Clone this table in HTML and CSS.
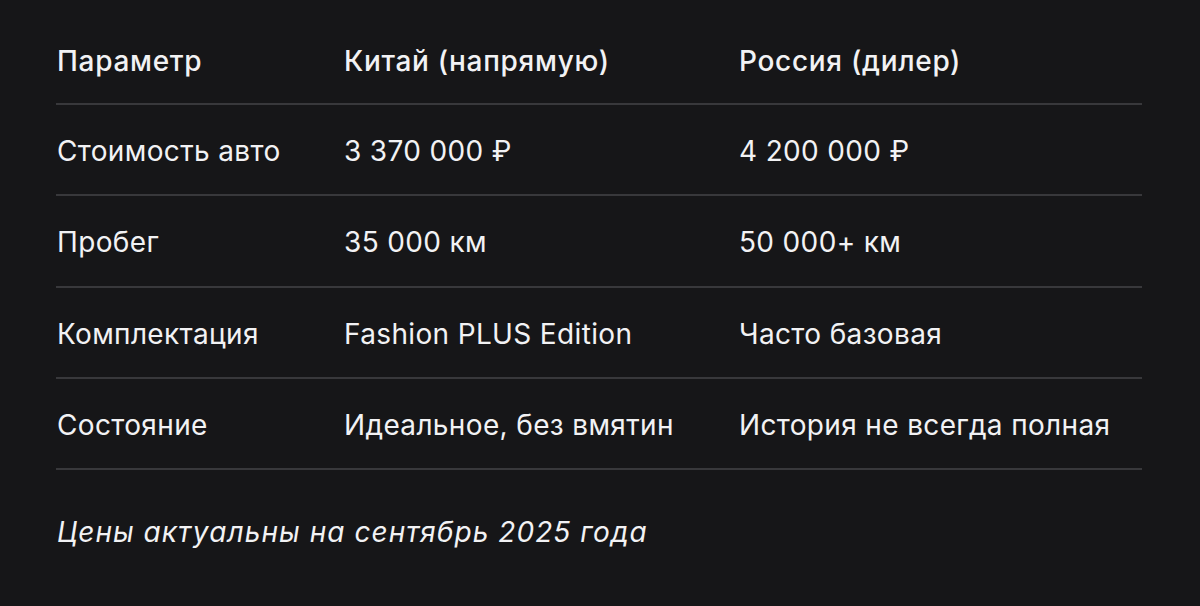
FILE: index.html
```html
<!DOCTYPE html>
<html lang="ru">
<head>
<meta charset="utf-8">
<link rel="stylesheet" href="styles.css">
</head>
<body>
<div class="wrap">
  <div class="table">
    <div class="row head">
      <div class="cell">Параметр</div>
      <div class="cell">Китай (напрямую)</div>
      <div class="cell">Россия (дилер)</div>
    </div>
    <div class="row">
      <div class="cell">Стоимость авто</div>
      <div class="cell">3 370 000 ₽</div>
      <div class="cell">4 200 000 ₽</div>
    </div>
    <div class="row">
      <div class="cell">Пробег</div>
      <div class="cell">35 000 км</div>
      <div class="cell">50 000+ км</div>
    </div>
    <div class="row">
      <div class="cell">Комплектация</div>
      <div class="cell">Fashion PLUS Edition</div>
      <div class="cell">Часто базовая</div>
    </div>
    <div class="row">
      <div class="cell">Состояние</div>
      <div class="cell">Идеальное, без вмятин</div>
      <div class="cell">История не всегда полная</div>
    </div>
  </div>
  <p class="note">Цены актуальны на сентябрь 2025 года</p>
</div>
</body>
</html>
```
FILE: styles.css
```css
html, body {
  margin: 0;
  padding: 0;
  background: #161618;
}
body {
  font-family: Inter, "Noto Sans", sans-serif;
  color: #f2f2f4;
  font-size: 28px;
  letter-spacing: 0.35px;
  width: 1200px;
  height: 606px;
  overflow: hidden;
}
.wrap {
  padding: 16px 58px 0 56px;
}
.table {
  display: flex;
  flex-direction: column;
}
.row {
  display: grid;
  grid-template-columns: 287px 395px 1fr;
  height: 89.25px;
  align-items: center;
  border-bottom: 2px solid #38383b;
}
.row.head {
  height: 87px;
}
.head .cell {
  font-weight: 500;
  letter-spacing: 0.7px;
}
.cell {
  padding-left: 1px;
  padding-top: 3px;
  line-height: 32px;
}
.note {
  margin: 46px 0 0 1px;
  font-style: italic;
  letter-spacing: 1.05px;
  line-height: 32px;
}
```
